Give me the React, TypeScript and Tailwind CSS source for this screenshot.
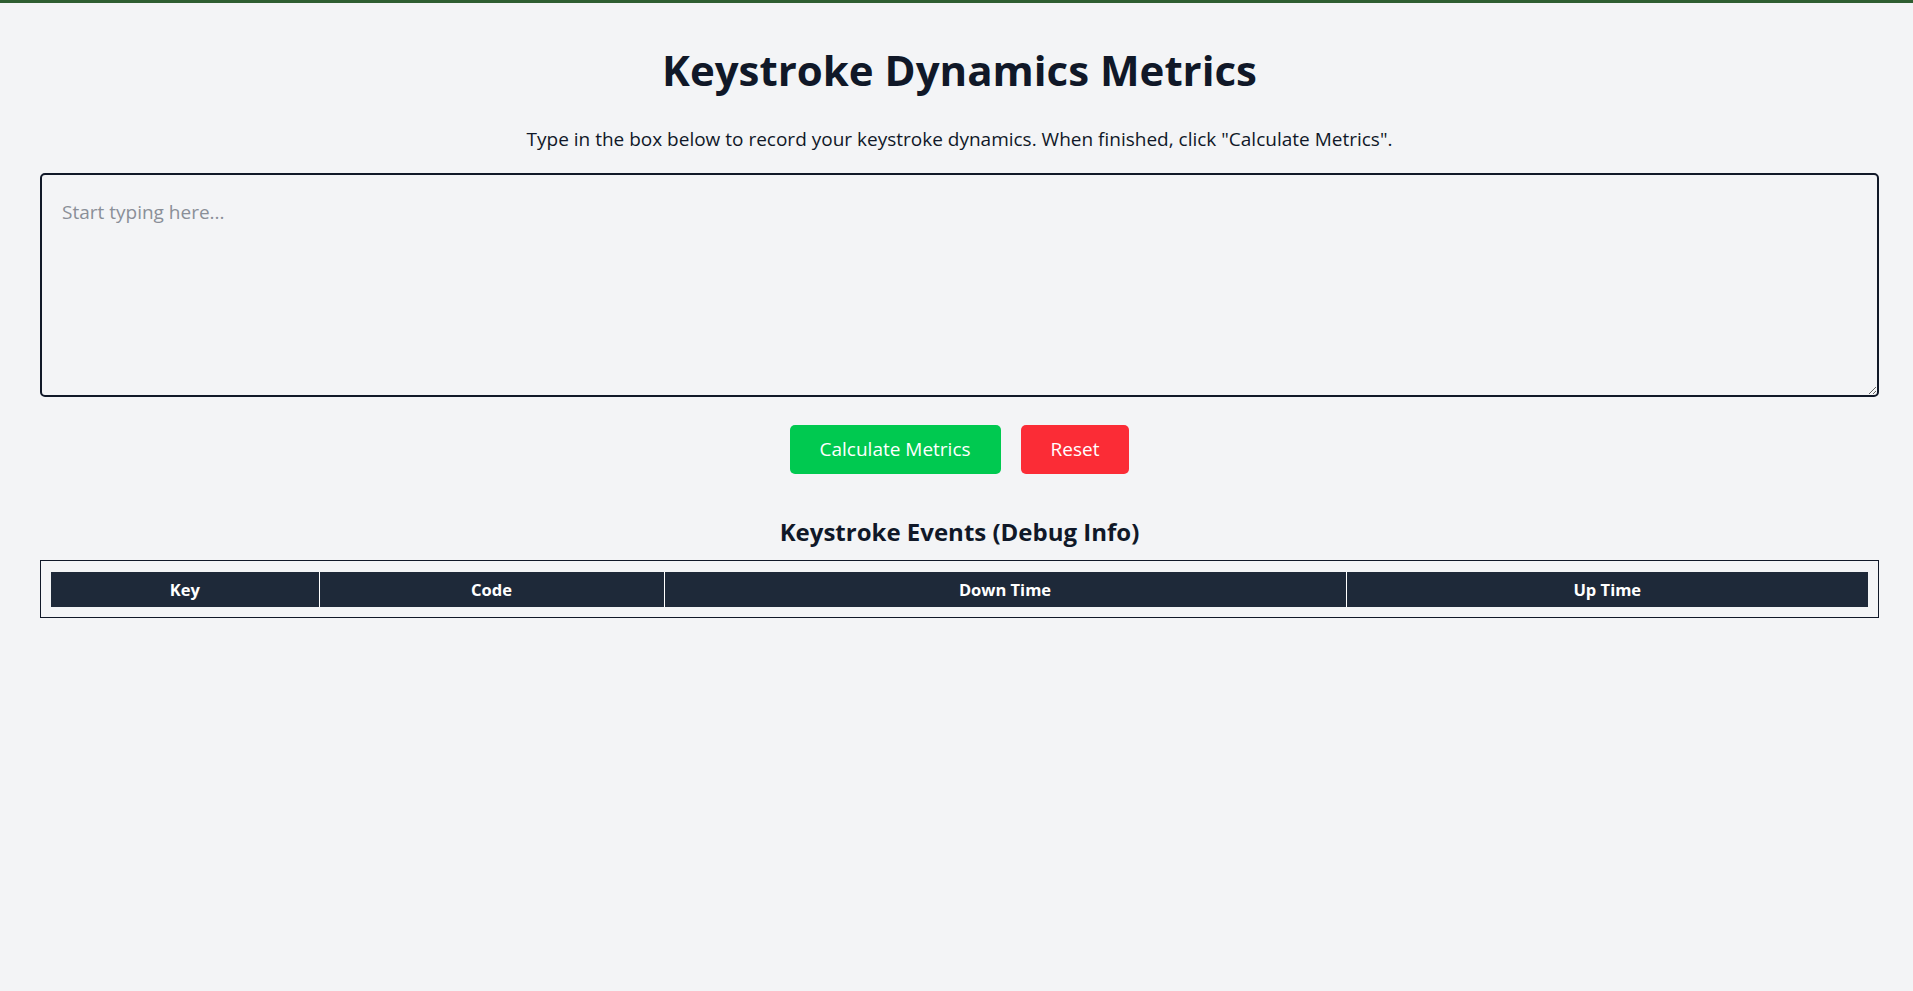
import React, { useState } from 'react';

type KeyEvent = {
  key: string;
  code: string;
  downTime: number;
  upTime: number | null;
};

const App: React.FC = () => {
  const [text, setText] = useState('');
  const [events, setEvents] = useState<KeyEvent[]>([]);

  const handleKeyDown = (e: React.KeyboardEvent<HTMLTextAreaElement>) => {
    const now = performance.now();
    setEvents((prev) => [...prev, { key: e.key, code: e.code, downTime: now, upTime: null }]);
  };

  const handleKeyUp = (e: React.KeyboardEvent<HTMLTextAreaElement>) => {
    const now = performance.now();
    setEvents((prev) => {
      const next = [...prev];
      for (let i = next.length - 1; i >= 0; i--) {
        if (next[i].code === e.code && next[i].upTime === null) {
          next[i] = { ...next[i], upTime: now };
          break;
        }
      }
      return next;
    });
  };

  const handleReset = () => {
    setText('');
    setEvents([]);
  };

  return (
    <div
      className="min-h-screen border-t-[3px] border-[#2e5e31] bg-[#f3f4f6] text-[#101828]"
      style={{ fontFamily: '"Open Sans", "Noto Sans", sans-serif' }}
    >
      <div className="pl-[40px] pr-[34px] pt-[40px]">
        <h1 className="text-center text-[42px] font-bold leading-[54px] text-[#101828]">
          Keystroke Dynamics Metrics
        </h1>
        <p className="mt-[28px] text-center text-[19px] leading-[28px]">
          Type in the box below to record your keystroke dynamics. When finished, click "Calculate
          Metrics".
        </p>

        <textarea
          value={text}
          onChange={(e) => setText(e.target.value)}
          onKeyDown={handleKeyDown}
          onKeyUp={handleKeyUp}
          placeholder="Start typing here..."
          className="mt-[20px] block h-[224px] w-full resize-y rounded-[5px] border-2 border-[#101828] bg-[#f3f4f6] px-[20px] pb-[17px] pt-[23px] text-[19px] leading-[28px] text-[#101828] outline-none placeholder:text-[#8a8f98]"
        />

        <div className="mt-[28px] flex justify-center gap-[20px]">
          <button className="h-[49px] rounded-[5px] bg-[#00c950] px-[30px] text-[19px] text-white">
            Calculate Metrics
          </button>
          <button
            onClick={handleReset}
            className="h-[49px] rounded-[5px] bg-[#fb2c36] px-[30px] text-[19px] text-white"
          >
            Reset
          </button>
        </div>

        <h2 className="mt-[42px] text-center text-[24px] font-bold leading-[32px]">
          Keystroke Events (Debug Info)
        </h2>

        <div className="mt-[12px] border border-[#101828] px-[10px] pb-[10px] pt-[11px]">
          <table className="w-full table-fixed border-collapse">
            <thead>
              <tr className="bg-[#1e2939] text-white">
                <th className="w-[268px] border-r border-white py-[5px] text-[16.5px] font-bold leading-[25px]">
                  Key
                </th>
                <th className="w-[345px] border-r border-white py-[5px] text-[16.5px] font-bold leading-[25px]">
                  Code
                </th>
                <th className="w-[682px] border-r border-white py-[5px] text-[16.5px] font-bold leading-[25px]">
                  Down Time
                </th>
                <th className="py-[5px] text-[16.5px] font-bold leading-[25px]">Up Time</th>
              </tr>
            </thead>
            <tbody>
              {events.map((ev, i) => (
                <tr key={i} className="text-center">
                  <td className="border border-[#d1d5dc] py-[5px]">{ev.key}</td>
                  <td className="border border-[#d1d5dc] py-[5px]">{ev.code}</td>
                  <td className="border border-[#d1d5dc] py-[5px]">{ev.downTime.toFixed(2)}</td>
                  <td className="border border-[#d1d5dc] py-[5px]">
                    {ev.upTime === null ? '-' : ev.upTime.toFixed(2)}
                  </td>
                </tr>
              ))}
            </tbody>
          </table>
        </div>
      </div>
    </div>
  );
};

export default App;
